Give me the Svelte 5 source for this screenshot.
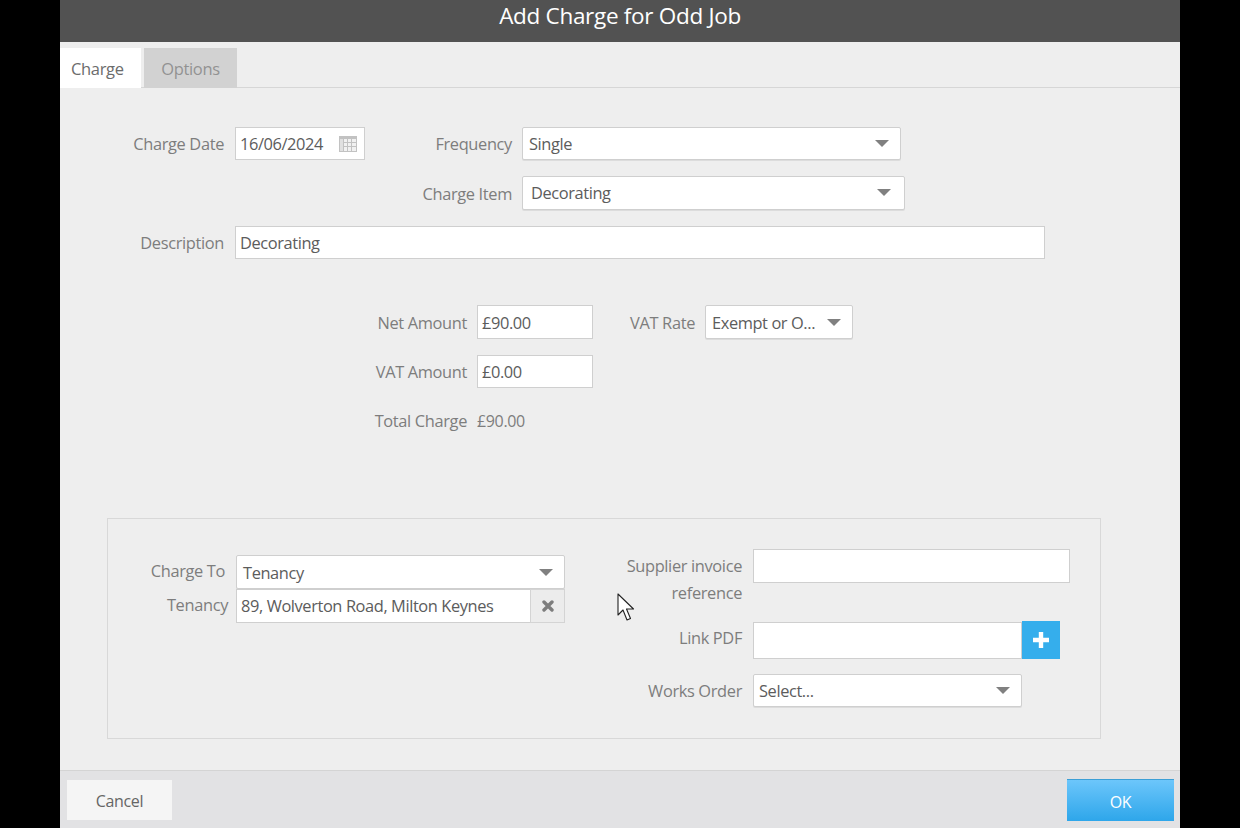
<script>
  let chargeDate = '16/06/2024';
  let description = 'Decorating';
  const tabs = ['Charge', 'Options'];
  let activeTab = 'Charge';
</script>

{#snippet caret()}
  <svg class="caret" width="14" height="7" viewBox="0 0 14 7" aria-hidden="true"><path d="M0 0h14L7 7z" fill="#808080"/></svg>
{/snippet}

<div class="modal">
  <header>Add Charge for Odd Job</header>

  <div class="tabs">
    {#each tabs as tab}
      <button class="tab" class:active={activeTab === tab} onclick={() => activeTab = tab}>{tab}</button>
    {/each}
  </div>

  <main>
    <section class="top">
      <div class="row r1">
        <span class="lbl w-date">Charge Date</span>
        <div class="field date">
          <span>{chargeDate}</span>
          <svg class="cal" width="18" height="16" viewBox="0 0 18 16" aria-hidden="true">
            <rect x="0" y="0" width="18" height="16" fill="#c2c2c2"/>
            <rect x="1" y="3" width="3" height="12" fill="#e0e0e0"/>
            <g fill="#f1f1f1">
              <rect x="5" y="3" width="3" height="3"/><rect x="9" y="3" width="3" height="3"/><rect x="13" y="3" width="4" height="3"/>
              <rect x="5" y="7" width="3" height="3"/><rect x="9" y="7" width="3" height="3"/><rect x="13" y="7" width="4" height="3"/>
              <rect x="5" y="11" width="3" height="4"/><rect x="9" y="11" width="3" height="4"/><rect x="13" y="11" width="4" height="4"/>
            </g>
          </svg>
        </div>
        <span class="lbl w-freq">Frequency</span>
        <div class="field select freq"><span>Single</span>{@render caret()}</div>
      </div>

      <div class="row r2">
        <span class="lbl w-item">Charge Item</span>
        <div class="field select item"><span>Decorating</span>{@render caret()}</div>
      </div>

      <div class="row r3">
        <span class="lbl w-date">Description</span>
        <div class="field desc"><span>{description}</span></div>
      </div>
    </section>

    <section class="amounts">
      <div class="row">
        <span class="lbl w-amount">Net Amount</span>
        <div class="field amount first"><span>£90.00</span></div>
        <span class="lbl w-vat">VAT Rate</span>
        <div class="field select rate"><span>Exempt or O...</span>{@render caret()}</div>
      </div>
      <div class="row">
        <span class="lbl w-amount">VAT Amount</span>
        <div class="field amount"><span>£0.00</span></div>
      </div>
      <div class="row total">
        <span class="lbl w-amount">Total Charge</span>
        <span class="value">£90.00</span>
      </div>
    </section>

    <section class="panel">
      <div class="col-left">
        <div class="row">
          <span class="lbl w-to">Charge To</span>
          <div class="field select to"><span>Tenancy</span>{@render caret()}</div>
        </div>
        <div class="row">
          <span class="lbl w-ten">Tenancy</span>
          <div class="tenancy">
            <div class="field ten-text"><span>89, Wolverton Road, Milton Keynes</span></div>
            <div class="clear">
              <svg width="12" height="12" viewBox="0 0 12 12" aria-hidden="true"><path d="M2 2l8 8M10 2l-8 8" stroke="#7d7d7d" stroke-width="3.4" stroke-linecap="round"/></svg>
            </div>
          </div>
        </div>
      </div>

      <div class="col-right">
        <div class="row supplier">
          <span class="lbl w-sup">Supplier invoice reference</span>
          <div class="field sup-input"></div>
        </div>
        <div class="row link">
          <span class="lbl w-sup">Link PDF</span>
          <div class="field link-input"></div>
          <button class="add" aria-label="Add">
            <svg width="18" height="18" viewBox="0 0 18 18" aria-hidden="true"><path d="M9 1v16M1 9h16" stroke="#fff" stroke-width="4.4"/></svg>
          </button>
        </div>
        <div class="row works">
          <span class="lbl w-sup">Works Order</span>
          <div class="field select order"><span>Select...</span>{@render caret()}</div>
        </div>
      </div>
    </section>
  </main>

  <footer>
    <button class="btn cancel">Cancel</button>
    <button class="btn ok">OK</button>
  </footer>

  <!-- mouse pointer captured in the screen recording -->
  <svg class="pointer" width="20" height="28" viewBox="0 0 20 28" aria-hidden="true">
    <path d="M1 1v21l5-5 4 10 3.500-1.500-4-9.500h7z" fill="#fff" stroke="#222" stroke-width="1.100" stroke-linejoin="round"/>
  </svg>
</div>

<style>
  :global(body) {
    background: #000;
    font-family: "Open Sans", "Noto Sans", sans-serif;
  }

  .modal {
    position: relative;
    width: 1120px;
    height: 828px;
    margin: 0 auto;
    background: #eeeeee;
    display: flex;
    flex-direction: column;
    overflow: hidden;
    color: #7d7d7d;
    font-size: 16.4px;
    letter-spacing: -0.35px;
  }

  header {
    height: 42px;
    flex: none;
    background: #525252;
    color: #fff;
    font-size: 22.5px;
    letter-spacing: -0.3px;
    line-height: 31px;
    text-align: center;
  }

  .tabs {
    height: 46px;
    flex: none;
    display: flex;
    align-items: flex-end;
    gap: 3px;
    border-bottom: 1px solid #d6d6d6;
    box-sizing: border-box;
  }
  .tab {
    height: 40px;
    margin-bottom: -1px;
    border: 0;
    padding: 0;
    font: inherit;
    font-size: 16.5px;
    letter-spacing: -0.35px;
    background: #d2d2d2;
    color: #929292;
    width: 93px;
  }
  .tab.active {
    width: 81px;
    padding-left: 11px;
    text-align: left;
    background: #fff;
    color: #6c6c6c;
  }

  main {
    flex: 1;
    min-height: 0;
  }

  .row {
    display: flex;
    align-items: center;
  }

  .lbl {
    flex: none;
    text-align: right;
    margin-right: 10px;
    line-height: 27px;
  }
  .w-date { width: 164px; margin-right: 11px; }
  .w-freq { width: 147px; }
  .w-item { width: 452px; }
  .w-amount { width: 407px; }
  .w-vat { width: 92px; margin-left: 10px; }
  .w-to { width: 117px; margin-right: 11px; padding-bottom: 4px; }
  .w-ten { width: 120px; margin-right: 8px; padding-bottom: 4px; }
  .w-sup { width: 120px; margin-right: 11px; }

  .field {
    box-sizing: border-box;
    flex: none;
    display: flex;
    align-items: center;
    justify-content: space-between;
    height: 33px;
    padding: 0 4px;
    background: #fff;
    border: 1px solid #cfcfcf;
    color: #5c5c5c;
    font-size: 16.4px;
    letter-spacing: -0.4px;
  }
  .select {
    padding: 0 11px 0 6px;
    border-radius: 2px;
    box-shadow: 0 1px 0 #dcdcdc;
  }

  .top {
    padding-top: 39px;
  }
  .r2 { margin-top: 16px; height: 34px; }
  .r3 { margin-top: 16px; }

  .date { width: 130px; }
  .cal { margin-right: 3px; }
  .freq { width: 379px; }
  .item { width: 383px; height: 34px; padding: 0 13px 1px 8px; }
  .desc { width: 810px; }

  .amounts {
    margin-top: 46px;
    display: flex;
    flex-direction: column;
    gap: 16px;
  }
  .amount { width: 116px; }
  .amount.first { height: 34px; }
  .rate { width: 148px; height: 34px; }
  .total { margin-top: 3px; }
  .value { font-size: 16px; color: #7d7d7d; }

  .panel {
    margin: 84px 0 0 47px;
    box-sizing: border-box;
    width: 994px;
    height: 221px;
    border: 1px solid #d8d8d8;
    display: flex;
    position: relative;
  }

  .col-left {
    width: 458px;
    flex: none;
    padding-top: 36px;
    box-sizing: border-box;
  }
  .to { width: 329px; height: 34px; padding-left: 6px; }
  .tenancy {
    display: flex;
    width: 329px;
    height: 34px;
    flex: none;
  }
  .ten-text {
    width: 294px;
    height: 34px;
    border-right: 0;
    padding-bottom: 1px;
  }
  .clear {
    box-sizing: border-box;
    width: 35px;
    display: flex;
    align-items: center;
    justify-content: center;
    background: #ececec;
    border: 1px solid #d4d4d4;
  }

  .col-right {
    padding: 30px 0 0 56px;
  }
  .supplier { align-items: flex-start; }
  .supplier .lbl { padding-top: 3px; }
  .sup-input { width: 317px; height: 34px; }
  .link { margin-top: 15px; }
  .link .lbl { padding-bottom: 6px; }
  .link-input { width: 269px; height: 37px; }
  .add {
    width: 38px;
    height: 38px;
    flex: none;
    border: 0;
    padding: 0;
    background: #35aeec;
    display: flex;
    align-items: center;
    justify-content: center;
  }
  .works { margin-top: 15px; }
  .order { width: 269px; height: 33px; padding-left: 5px; padding-right: 11px; }

  footer {
    height: 58px;
    flex: none;
    box-sizing: border-box;
    border-top: 1px solid #d4d4d4;
    background: #e2e2e4;
    display: flex;
    align-items: flex-start;
    justify-content: space-between;
    padding: 9px 6px 0 7px;
  }
  .btn {
    height: 40px;
    width: 105px;
    border: 0;
    padding: 2px 0 0;
    font: inherit;
    font-size: 16px;
    letter-spacing: -0.35px;
  }
  .cancel {
    background: #f5f5f5;
    color: #666;
  }
  .ok {
    width: 107px;
    height: 42px;
    margin-top: -1px;
    background: linear-gradient(#6cc6fb, #2ea6ea);
    border-top: 1px solid #3c9fd6;
    color: #fff;
  }

  .pointer {
    position: absolute;
    left: 557px;
    top: 593px;
  }
</style>
